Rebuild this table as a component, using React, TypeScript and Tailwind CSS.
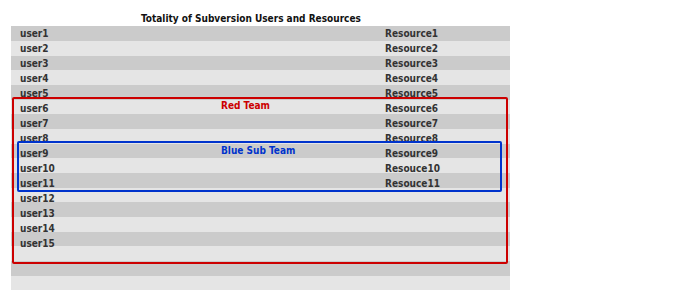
const USERS = Array.from({ length: 15 }, (_, i) => `user${i + 1}`)
const RESOURCES = [
  'Resource1',
  'Resource2',
  'Resource3',
  'Resource4',
  'Resource5',
  'Resource6',
  'Resource7',
  'Resource8',
  'Resource9',
  'Resouce10',
  'Resouce11',
]

export default function App() {
  return (
    <div className="relative w-[685px] h-[296px] bg-white font-['DejaVu_Sans_Condensed','DejaVu_Sans',sans-serif] font-bold text-[10px] text-[#333333]">
      {/* Title */}
      <div className="h-[27px] pl-[141px] pt-[12px] leading-[14px] text-[10px] text-[#111111]">
        Totality of Subversion Users and Resources
      </div>

      {/* Striped table */}
      <div className="relative ml-[11px] w-[499px] h-[264px] bg-[repeating-linear-gradient(to_bottom,#cbcbcb_0px,#cbcbcb_15px,#e5e5e5_15px,#e5e5e5_30px,#cbcbcb_30px,#cbcbcb_44px,#e5e5e5_44px,#e5e5e5_59px,#cbcbcb_59px,#cbcbcb_74px,#e5e5e5_74px,#e5e5e5_88px)]">
        <div className="flex flex-col -mt-[1px]">
          {USERS.map((u, i) => (
            <div key={u} className="flex h-[15px] items-center leading-[15px]">
              <span className="w-[374px] pl-[9px]">{u}</span>
              <span>{RESOURCES[i] ?? ''}</span>
            </div>
          ))}
        </div>

        {/* Red Team box */}
        <div className="absolute left-[1px] top-[71px] w-[496px] h-[167px] border-2 border-[#cc0000] rounded-[2px]" />
        <div className="absolute left-[210px] top-[72px] leading-[15px] text-[#cc0000]">Red Team</div>

        {/* Blue Sub Team box */}
        <div className="absolute left-[6px] top-[115px] w-[485px] h-[51px] border-2 border-[#0033cc] rounded-[2px]" />
        <div className="absolute left-[210px] top-[117px] leading-[15px] text-[#0033cc]">Blue Sub Team</div>
      </div>
    </div>
  )
}
